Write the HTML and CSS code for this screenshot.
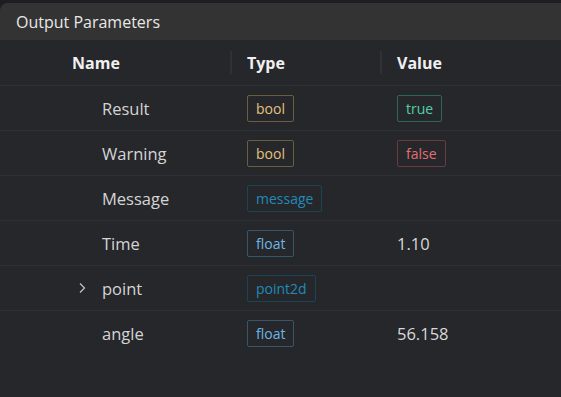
FILE: index.html
```html
<!DOCTYPE html>
<html lang="en">
<head>
    <meta charset="UTF-8">
    <meta name="viewport" content="width=device-width, initial-scale=1.0">
    <title>Output Parameters</title>
    <link rel="stylesheet" href="styles.css">
</head>
<body>

<div class="panel">
    <div class="panel-title">Output Parameters</div>

    <div class="params">
        <div class="row head">
            <div class="cell name-head">Name</div>
            <div class="cell sep">Type</div>
            <div class="cell sep">Value</div>
        </div>

        <div class="row">
            <div class="cell name"><span class="toggle"></span>Result</div>
            <div class="cell"><span class="tag t-bool">bool</span></div>
            <div class="cell"><span class="tag v-true">true</span></div>
        </div>
        <div class="row">
            <div class="cell name"><span class="toggle"></span>Warning</div>
            <div class="cell"><span class="tag t-bool">bool</span></div>
            <div class="cell"><span class="tag v-false">false</span></div>
        </div>
        <div class="row">
            <div class="cell name"><span class="toggle"></span>Message</div>
            <div class="cell"><span class="tag t-struct">message</span></div>
            <div class="cell"></div>
        </div>
        <div class="row">
            <div class="cell name"><span class="toggle"></span>Time</div>
            <div class="cell"><span class="tag t-float">float</span></div>
            <div class="cell value">1.10</div>
        </div>
        <div class="row">
            <div class="cell name">
                <span class="toggle">
                    <svg width="10" height="12" viewBox="0 0 10 12"><path d="M3 1.5 L7.5 6 L3 10.5" fill="none" stroke="#c4c4c4" stroke-width="1.2"/></svg>
                </span>point
            </div>
            <div class="cell"><span class="tag t-struct">point2d</span></div>
            <div class="cell"></div>
        </div>
        <div class="row last">
            <div class="cell name"><span class="toggle"></span>angle</div>
            <div class="cell"><span class="tag t-float">float</span></div>
            <div class="cell value">56.158</div>
        </div>
    </div>
</div>

</body>
</html>
```

FILE: styles.css
```css
/* Output parameter panel, dark theme */
html, body {
    margin: 0;
    height: 100%;
    background-color: #1d1e21;
}
body {
    padding-top: 3px;
    box-sizing: border-box;
    font-family: "Open Sans", "Noto Sans", sans-serif;
    color: #d6d6d6;
}
.panel {
    height: 100%;
    margin-right: -10px;
    border-top-left-radius: 8px;
    overflow: hidden;
    background-color: #26272b;
}
.panel-title {
    height: 37px;
    padding-left: 16px;
    display: flex;
    align-items: center;
    background-color: #333333;
    color: #e8e8e8;
    font-size: 16px;
}
.params {
    padding-top: 1px;
}
.row {
    display: grid;
    grid-template-columns: 230px 150px 1fr;
    height: 44px;
    border-bottom: 1px solid #2f3035;
}
.row.last {
    border-bottom: none;
}
.cell {
    display: flex;
    align-items: center;
    font-size: 16.5px;
}
.head .cell {
    font-weight: bold;
    font-size: 16px;
    color: #f0f0f0;
}
.name-head {
    padding-left: 72px;
}
.sep {
    padding-left: 17px;
    position: relative;
}
.sep::before {
    content: "";
    position: absolute;
    left: 0;
    top: 10px;
    bottom: 11px;
    width: 2px;
    background-color: #303136;
}
.name {
    padding-left: 72px;
    color: #d4d4d4;
}
.toggle {
    width: 30px;
    display: flex;
    align-items: center;
    padding-left: 5px;
    box-sizing: border-box;
}
.row .cell:nth-child(2),
.row .cell:nth-child(3) {
    padding-left: 17px;
}
.value {
    color: #d8d8d8;
}
.tag {
    display: inline-block;
    height: 27px;
    line-height: 25px;
    padding: 0 8px;
    border: 1px solid;
    border-radius: 2px;
    font-size: 14px;
    box-sizing: border-box;
}
.t-bool {
    color: #e3c27f;
    border-color: #6a5d44;
}
.t-struct {
    color: #1f8bb9;
    border-color: #1c4457;
}
.t-float {
    color: #6bb7e2;
    border-color: #37566a;
}
.v-true {
    color: #4fd0a2;
    border-color: #2e6656;
}
.v-false {
    color: #e26f72;
    border-color: #6a3a3e;
}
```
